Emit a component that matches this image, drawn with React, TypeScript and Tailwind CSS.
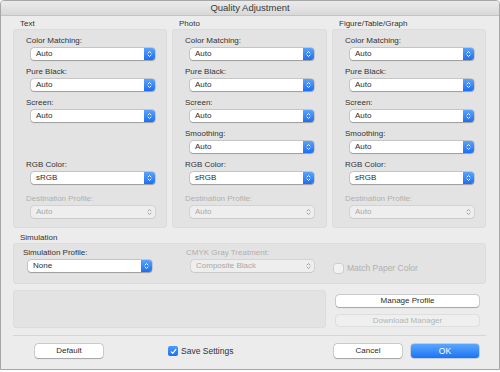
import React from "react";

function Chevrons({ color }: { color: string }) {
  return (
    <svg width="5" height="8" viewBox="0 0 5 8" fill="none">
      <path d="M1 3 L2.5 1.5 L4 3" stroke={color} strokeWidth="0.9" strokeLinecap="round" strokeLinejoin="round" />
      <path d="M1 5 L2.5 6.5 L4 5" stroke={color} strokeWidth="0.9" strokeLinecap="round" strokeLinejoin="round" />
    </svg>
  );
}

function Select({ value, disabled = false, width = "w-[124px]" }: { value: string; disabled?: boolean; width?: string }) {
  if (disabled) {
    return (
      <div className={`flex h-[12px] ${width} items-stretch rounded-[3px] bg-[#eeeeee] shadow-[0_0_0_0.5px_rgba(0,0,0,0.14),0_0.5px_0.5px_rgba(0,0,0,0.08)]`}>
        <span className="flex-1 pl-[5px] text-[8px] leading-[12px] text-[#a8a8a8]">{value}</span>
        <span className="flex w-[11px] items-center justify-center">
          <Chevrons color="#9a9a9a" />
        </span>
      </div>
    );
  }
  return (
    <div className={`flex h-[12px] ${width} items-stretch rounded-[3px] bg-white shadow-[0_0_0_0.5px_rgba(0,0,0,0.22),0_0.5px_1px_rgba(0,0,0,0.22)]`}>
      <span className="flex-1 pl-[5px] text-[8px] leading-[12px] text-[#2c2c2c]">{value}</span>
      <span className="flex w-[11px] items-center justify-center rounded-r-[3px] bg-gradient-to-b from-[#5aa3fc] to-[#1b6ef2]">
        <Chevrons color="#ffffff" />
      </span>
    </div>
  );
}

function Field({ label, value, disabled = false, hidden = false, extra = "" }: { label: string; value: string; disabled?: boolean; hidden?: boolean; extra?: string }) {
  return (
    <div className={`flex flex-col gap-[2px] ${hidden ? "invisible" : ""} ${extra}`}>
      <span className={`text-[8px] leading-[10px] ${disabled ? "text-[#b0b0b0]" : "text-[#333333]"}`}>{label}</span>
      <div className="pl-[5px]">
        <Select value={value} disabled={disabled} />
      </div>
    </div>
  );
}

function Button({ children, width, disabled = false }: { children: React.ReactNode; width: string; disabled?: boolean }) {
  return (
    <div
      className={`flex ${width} items-center justify-center rounded-[3px] text-[8px] ${
        disabled
          ? "bg-[#efefef] text-[#b4b4b4] shadow-[0_0_0_0.5px_rgba(0,0,0,0.12)]"
          : "bg-white text-[#2c2c2c] shadow-[0_0_0_0.5px_rgba(0,0,0,0.25),0_0.5px_1px_rgba(0,0,0,0.2)]"
      }`}
    >
      {children}
    </div>
  );
}

export default function App() {
  const columns = [
    { title: "Text", width: "w-[154px]", smoothing: false },
    { title: "Photo", width: "w-[155px]", smoothing: true },
    { title: "Figure/Table/Graph", width: "w-[154px]", smoothing: true },
  ];

  return (
    <div className="h-[372px] w-[500px] bg-white font-['Liberation_Sans',Arial,sans-serif]">
      <div className="h-[370px] w-[500px] overflow-hidden rounded-t-[4px] border border-[#a6a6a6] bg-[#ececec]">
        {/* title bar */}
        <div className="flex h-[15px] items-center justify-center border-b border-[#c4c4c4] bg-gradient-to-b from-[#ececec] to-[#d8d8d8] text-[9.5px] text-[#3a3a3a]">
          Quality Adjustment
        </div>

        <div className="pl-[12px] pr-[13px]">
          {/* three groups */}
          <div className="flex gap-[5px]">
            {columns.map((col) => (
              <div key={col.title} className={`flex ${col.width} flex-col`}>
                <div className="h-[13px] pl-[7px] pt-[3px] text-[8px] leading-[10px] text-[#333333]">{col.title}</div>
                <div className="flex h-[199px] flex-col gap-[7px] rounded-[3px] border border-[#dcdcdc] bg-[#e3e3e3] pl-[12px] pt-[6px]">
                  <Field label="Color Matching:" value="Auto" />
                  <Field label="Pure Black:" value="Auto" />
                  <Field label="Screen:" value="Auto" />
                  <Field label="Smoothing:" value="Auto" hidden={!col.smoothing} />
                  <Field label="RGB Color:" value="sRGB" />
                  <Field label="Destination Profile:" value="Auto" disabled extra="mt-[3px]" />
                </div>
              </div>
            ))}
          </div>

          {/* simulation */}
          <div className="h-[15px] pl-[7px] pt-[5px] text-[8px] leading-[10px] text-[#333333]">Simulation</div>
          <div className="flex h-[41px] rounded-[3px] border border-[#dcdcdc] bg-[#e3e3e3] pl-[9px] pt-[4px]">
            <div className="flex w-[163px] flex-col gap-[2px]">
              <span className="text-[8px] leading-[10px] text-[#333333]">Simulation Profile:</span>
              <div className="pl-[5px]">
                <Select value="None" />
              </div>
            </div>
            <div className="flex w-[148px] flex-col gap-[2px]">
              <span className="text-[8px] leading-[10px] text-[#b0b0b0]">CMYK Gray Treatment:</span>
              <div className="pl-[5px]">
                <Select value="Composite Black" disabled width="w-[123px]" />
              </div>
            </div>
            <div className="mt-[15px] flex h-[10px] items-center gap-[4px]">
              <span className="h-[9px] w-[9px] rounded-[2px] bg-[#f2f2f2] shadow-[0_0_0_0.5px_rgba(0,0,0,0.18)]" />
              <span className="text-[8.5px] leading-[10px] text-[#b0b0b0]">Match Paper Color</span>
            </div>
          </div>

          {/* profile area */}
          <div className="mt-[6px] flex h-[38px] gap-[10px]">
            <div className="h-[38px] w-[313px] rounded-[3px] border border-[#dcdcdc] bg-[#e3e3e3]" />
            <div className="flex flex-col gap-[8px] pt-[5px]">
              <div className="flex h-[12px]">
                <Button width="w-[143px]">Manage Profile</Button>
              </div>
              <div className="flex h-[11px]">
                <Button width="w-[143px]" disabled>Download Manager</Button>
              </div>
            </div>
          </div>

          <div className="mt-[7px] border-t border-[#d6d6d6]" />

          {/* footer */}
          <div className="mt-[8px] flex h-[14px] items-stretch">
            <div className="ml-[22px] flex">
              <Button width="w-[68px]">Default</Button>
            </div>
            <div className="ml-[65px] flex items-center gap-[3px]">
              <span className="flex h-[10px] w-[10px] items-center justify-center rounded-[2px] bg-gradient-to-b from-[#4c9cfc] to-[#1b70f2]">
                <svg width="7" height="7" viewBox="0 0 7 7" fill="none">
                  <path d="M1.2 3.8 L2.8 5.4 L5.8 1.4" stroke="#ffffff" strokeWidth="1.1" strokeLinecap="round" strokeLinejoin="round" />
                </svg>
              </span>
              <span className="text-[8.5px] leading-[10px] text-[#333333]">Save Settings</span>
            </div>
            <div className="ml-auto flex gap-[9px] pr-[7px]">
              <Button width="w-[68px]">Cancel</Button>
              <div className="flex w-[68px] items-center justify-center rounded-[3px] bg-gradient-to-b from-[#5aa7fd] to-[#1c72f3] text-[8.5px] text-white shadow-[0_0_0_0.5px_rgba(0,60,170,0.35)]">
                OK
              </div>
            </div>
          </div>
        </div>
      </div>
    </div>
  );
}
